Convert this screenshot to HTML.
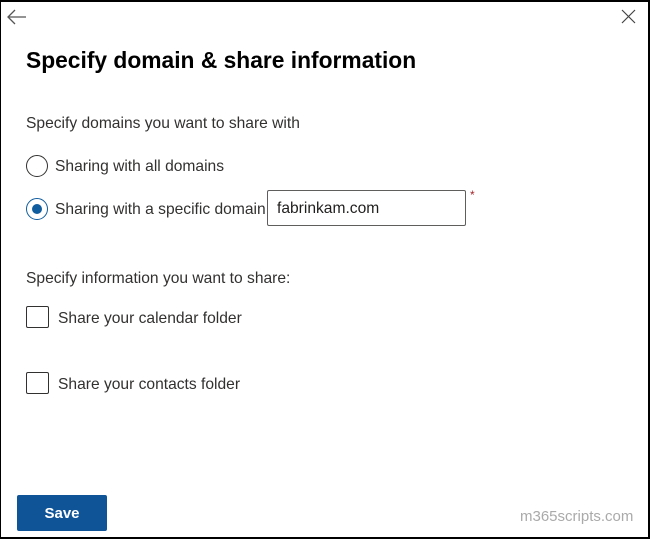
<!DOCTYPE html>
<html><head><style>
*{margin:0;padding:0;box-sizing:border-box}
body{width:650px;height:539px;background:#fff;font-family:"Liberation Sans",sans-serif;position:relative;overflow:hidden}
.frame{position:absolute;left:0;top:0;width:650px;height:539px;border:1px solid #000;border-top-width:2px;border-right-width:2px;border-bottom-width:2px}
.t{position:absolute;white-space:nowrap;color:#323130;font-size:15.6px}
.radio{position:absolute;width:22px;height:22px;border:1px solid #323130;border-radius:50%}
.cb{position:absolute;width:23px;height:22px;border:1px solid #323130;border-radius:2px}
</style></head><body>
<div class="frame"></div>
<svg style="position:absolute;left:6px;top:8px" width="22" height="18" viewBox="0 0 22 18"><path d="M20 9H2M9 2L2 9l7 7" fill="none" stroke="#555" stroke-width="1.3"/></svg>
<svg style="position:absolute;left:621px;top:9px" width="15" height="15" viewBox="0 0 15 15"><path d="M1 1l13 13M14 1L1 14" fill="none" stroke="#444" stroke-width="1.2"/></svg>
<div class="t" style="left:26px;top:47px;font-size:22.8px;font-weight:bold;color:#000">Specify domain &amp; share information</div>
<div class="t" style="left:26px;top:115px">Specify domains you want to share with</div>
<div class="radio" style="left:26px;top:155px"></div>
<div class="t" style="left:55px;top:158px">Sharing with all domains</div>
<div class="radio" style="left:26px;top:198px;border-color:#0f5c9e"><div style="position:absolute;left:5px;top:5px;width:10px;height:10px;border-radius:50%;background:#0f5c9e"></div></div>
<div class="t" style="left:55px;top:201px">Sharing with a specific domain</div>
<div style="position:absolute;left:267px;top:190px;width:199px;height:36px;border:1px solid #605e5c;border-radius:2px"></div>
<div class="t" style="left:277px;top:200px;color:#201f1e">fabrinkam.com</div>
<div class="t" style="left:470px;top:188px;font-size:12px;color:#a4262c">*</div>
<div class="t" style="left:26px;top:270px">Specify information you want to share:</div>
<div class="cb" style="left:26px;top:306px"></div>
<div class="t" style="left:58px;top:310px">Share your calendar folder</div>
<div class="cb" style="left:26px;top:372px"></div>
<div class="t" style="left:58px;top:376px">Share your contacts folder</div>
<div style="position:absolute;left:17px;top:495px;width:90px;height:36px;background:#0f5497;border-radius:2px;color:#fff;font-weight:bold;font-size:15px;text-align:center;line-height:38px">Save</div>
<div class="t" style="left:520px;top:508px;font-size:15px;color:#aaa">m365scripts.com</div>
</body></html>
